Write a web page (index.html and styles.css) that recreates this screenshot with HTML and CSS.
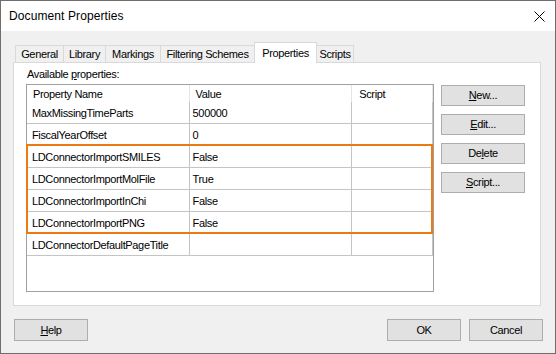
FILE: index.html
```html
<!DOCTYPE html>
<html>
<head>
<meta charset="utf-8">
<link rel="stylesheet" href="styles.css">
</head>
<body>
<div class="window">
  <div class="titlebar">
    <span class="title">Document Properties</span>
    <svg class="close" width="11" height="11" viewBox="0 0 11 11"><path d="M0.5 0.5 L10.5 10.5 M10.5 0.5 L0.5 10.5" stroke="#000" stroke-width="1" fill="none"/></svg>
  </div>
  <div class="client">
    <div class="tabs">
      <div class="tab w-general">General</div>
      <div class="tab w-library">Library</div>
      <div class="tab w-markings">Markings</div>
      <div class="tab w-filtering">Filtering Schemes</div>
      <div class="tab sel w-properties">Properties</div>
      <div class="tab w-scripts">Scripts</div>
    </div>
    <div class="panel">
      <div class="label">Available <u>p</u>roperties:</div>
      <div class="content">
        <div class="list">
          <div class="row head">
            <div class="cell c1">Property Name</div>
            <div class="cell c2">Value</div>
            <div class="cell c3">Script</div>
          </div>
          <div class="row">
            <div class="cell c1">MaxMissingTimeParts</div>
            <div class="cell c2">500000</div>
            <div class="cell c3"></div>
          </div>
          <div class="row">
            <div class="cell c1">FiscalYearOffset</div>
            <div class="cell c2">0</div>
            <div class="cell c3"></div>
          </div>
          <div class="row">
            <div class="cell c1">LDConnectorImportSMILES</div>
            <div class="cell c2">False</div>
            <div class="cell c3"></div>
          </div>
          <div class="row">
            <div class="cell c1">LDConnectorImportMolFile</div>
            <div class="cell c2">True</div>
            <div class="cell c3"></div>
          </div>
          <div class="row">
            <div class="cell c1">LDConnectorImportInChi</div>
            <div class="cell c2">False</div>
            <div class="cell c3"></div>
          </div>
          <div class="row">
            <div class="cell c1">LDConnectorImportPNG</div>
            <div class="cell c2">False</div>
            <div class="cell c3"></div>
          </div>
          <div class="row">
            <div class="cell c1">LDConnectorDefaultPageTitle</div>
            <div class="cell c2"></div>
            <div class="cell c3"></div>
          </div>
          <div class="highlight"></div>
        </div>
        <div class="side">
          <div class="btn"><u>N</u>ew...</div>
          <div class="btn"><u>E</u>dit...</div>
          <div class="btn">De<u>l</u>ete</div>
          <div class="btn"><u>S</u>cript...</div>
        </div>
      </div>
    </div>
    <div class="footer">
      <div class="btn fbtn help"><u>H</u>elp</div>
      <div class="btn fbtn">OK</div>
      <div class="btn fbtn">Cancel</div>
    </div>
  </div>
</div>
</body>
</html>
```

FILE: styles.css
```css
html, body {
  margin: 0;
  padding: 0;
  background: #f0f0f0;
}
body {
  font-family: "Liberation Sans", Arial, sans-serif;
  font-size: 11px;
  letter-spacing: -0.35px;
  color: #000;
}
u { text-decoration: underline; text-underline-offset: 1px; }

.window {
  width: 556px;
  height: 354px;
  box-sizing: border-box;
  border: 1px solid #6e6e6e;
  display: flex;
  flex-direction: column;
  background: #f0f0f0;
}

.titlebar {
  height: 30px;
  flex: none;
  background: #fff;
  display: flex;
  align-items: center;
  padding: 0 10px 0 8px;
}
.title {
  font-size: 12px;
  letter-spacing: 0.1px;
}
.close {
  margin-left: auto;
  display: block;
}

.client {
  flex: 1;
  padding: 11px 12px 0 12px;
  display: flex;
  flex-direction: column;
}

.tabs {
  height: 20px;
  display: flex;
  align-items: flex-end;
  padding-left: 2px;
}
.tab {
  box-sizing: border-box;
  height: 17px;
  border: 1px solid #d9d9d9;
  border-bottom: none;
  margin-right: -1px;
  line-height: 16px;
  text-align: center;
  background: #f0f0f0;
  white-space: nowrap;
}
.tab.sel {
  height: 21px;
  margin-bottom: -1px;
  padding-top: 2px;
  background: #fff;
  position: relative;
  z-index: 1;
}
.w-general { width: 49px; }
.w-library { width: 43px; }
.w-markings { width: 56px; }
.w-filtering { width: 95px; }
.w-properties { width: 63px; }
.w-scripts { width: 38px; }

.panel {
  box-sizing: border-box;
  width: 528px;
  height: 244px;
  background: #fff;
  border: 1px solid #d9d9d9;
  padding: 5px 0 0 12px;
}
.label {
  line-height: 13px;
  height: 13px;
  padding-left: 1px;
}
.content {
  margin-top: 3px;
  display: flex;
  gap: 7px;
}

.list {
  box-sizing: border-box;
  width: 408px;
  height: 208px;
  border: 1px solid #a0a0a0;
  position: relative;
  background: #fff;
}
.row {
  display: flex;
  height: 22px;
}
.row.head { height: 17px; }
.cell {
  box-sizing: border-box;
  height: 100%;
  border-right: 1px solid #c4c4c4;
  border-bottom: 1px solid #c4c4c4;
  line-height: 22px;
  white-space: nowrap;
  overflow: hidden;
  padding-left: 3px;
}
.c1 { width: 163px; padding-left: 5px; }
.c2 { width: 163px; }
.c3 { width: 81px; }
.head .cell {
  border-bottom: none;
  border-right-color: #e5e5e5;
  line-height: 19px;
  padding-left: 6px;
}
.head .c3 { padding-left: 7px; }

.highlight {
  position: absolute;
  left: -1px;
  top: 59px;
  width: 407px;
  height: 90px;
  box-sizing: border-box;
  border: 2px solid #ec7a13;
  pointer-events: none;
}

.side {
  margin-top: 1px;
  display: flex;
  flex-direction: column;
  gap: 8px;
}
.btn {
  box-sizing: border-box;
  width: 84px;
  height: 21px;
  border: 1px solid #adadad;
  background: #e1e1e1;
  text-align: center;
  line-height: 19px;
}

.footer {
  margin-top: 13px;
  display: flex;
  gap: 8px;
}
.fbtn {
  width: 74px;
  height: 22px;
  line-height: 20px;
}
.help {
  margin-left: 1px;
  margin-right: auto;
}
```
